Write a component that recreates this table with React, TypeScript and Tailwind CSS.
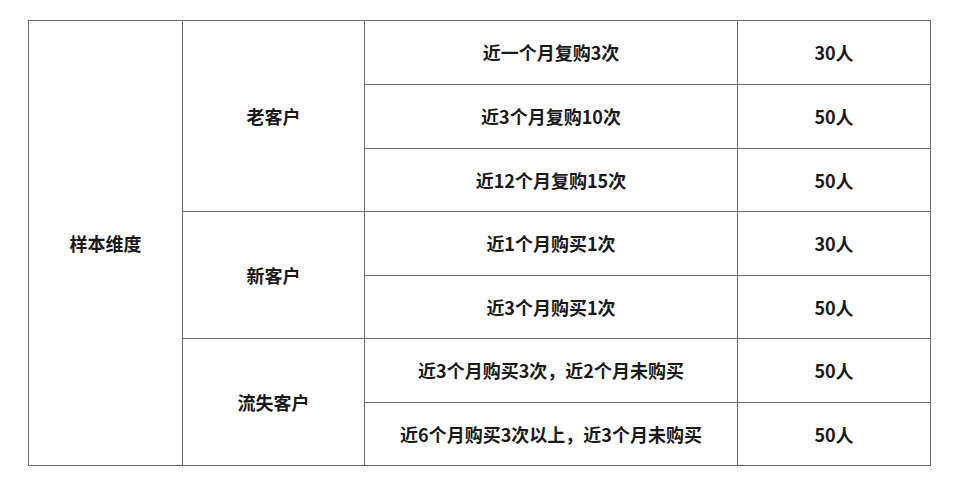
import React from "react";

const cell = "bg-white flex items-center justify-center text-[18px] font-bold text-[#1a1a1a]";

const App = () => {
  return (
    <div
      className="w-[962px] h-[485px] bg-white pt-[20px] pl-[28px]"
      style={{ fontFamily: '"Microsoft YaHei", "Noto Sans CJK SC", "Noto Sans", sans-serif' }}
    >
      <div className="grid grid-cols-[153px_181px_372px_192px] grid-rows-[63px_63px_62px_63px_62px_63px_62px] gap-px p-px bg-[#6b6b6b] w-[903px]">
        <div className={`${cell} row-span-7`}>样本维度</div>
        <div className={`${cell} row-span-3`}>老客户</div>
        <div className={cell}>近一个月复购3次</div>
        <div className={cell}>30人</div>
        <div className={cell}>近3个月复购10次</div>
        <div className={cell}>50人</div>
        <div className={cell}>近12个月复购15次</div>
        <div className={cell}>50人</div>
        <div className={`${cell} row-span-2`}>新客户</div>
        <div className={cell}>近1个月购买1次</div>
        <div className={cell}>30人</div>
        <div className={cell}>近3个月购买1次</div>
        <div className={cell}>50人</div>
        <div className={`${cell} row-span-2`}>流失客户</div>
        <div className={cell}>近3个月购买3次，近2个月未购买</div>
        <div className={cell}>50人</div>
        <div className={cell}>近6个月购买3次以上，近3个月未购买</div>
        <div className={cell}>50人</div>
      </div>
    </div>
  );
};

export default App;
